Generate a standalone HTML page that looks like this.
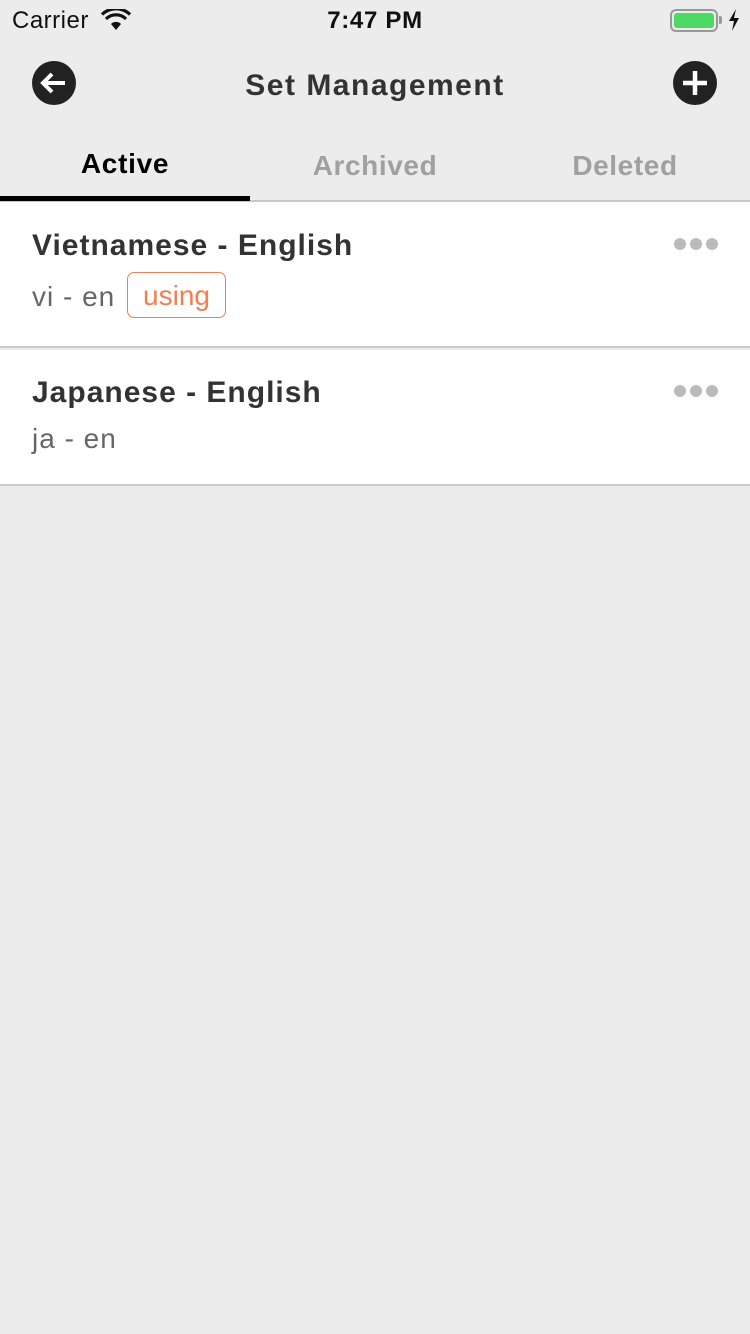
<!DOCTYPE html>
<html><head><meta charset="utf-8"><style>
*{margin:0;padding:0;box-sizing:border-box}
body{width:750px;height:1334px;background:#ececec;font-family:"Liberation Sans",sans-serif;position:relative;overflow:hidden}
.a{position:absolute;white-space:nowrap}
</style></head><body>
<div class="a" style="left:12px;top:7px;font-size:24px;color:#111;letter-spacing:0.5px">Carrier</div>
<svg class="a" style="left:101px;top:9px" width="30" height="22" viewBox="0 0 30 22"><path d="M15 21 L10 15 A7 7 0 0 1 20 15 Z" fill="#111"/><path d="M5 10 A14 14 0 0 1 25 10" stroke="#111" stroke-width="3.2" fill="none"/><path d="M1 5.5 A20 20 0 0 1 29 5.5" stroke="#111" stroke-width="3.2" fill="none"/></svg>
<div class="a" style="left:0;width:750px;text-align:center;top:7px;font-size:24px;font-weight:bold;color:#111;letter-spacing:0.7px">7:47 PM</div>
<div class="a" style="left:670px;top:9px;width:48px;height:23px;border:2px solid #999;border-radius:6px;padding:2px"><div style="width:100%;height:100%;background:#4cd964;border-radius:3px"></div></div>
<div class="a" style="left:719px;top:16px;width:3px;height:8px;background:#999;border-radius:0 2px 2px 0"></div>
<svg class="a" style="left:727px;top:9px" width="14" height="22" viewBox="0 0 14 22"><path d="M9 0 L2 12 H7 L5 22 L12 9 H7 Z" fill="#111"/></svg>
<svg class="a" style="left:32px;top:61px" width="44" height="44" viewBox="0 0 44 44"><circle cx="22" cy="22" r="22" fill="#222"/><path d="M33 22 H12 M20 13 L11 22 L20 31" stroke="#fff" stroke-width="4" fill="none"/></svg>
<div class="a" style="left:0;width:750px;text-align:center;top:69px;font-size:30px;font-weight:bold;color:#333;letter-spacing:1.5px">Set Management</div>
<svg class="a" style="left:673px;top:61px" width="44" height="44" viewBox="0 0 44 44"><circle cx="22" cy="22" r="22" fill="#222"/><path d="M22 10 V34 M10 22 H34" stroke="#fff" stroke-width="4.5"/></svg>
<div class="a" style="left:0;width:250px;text-align:center;top:148px;font-size:28px;font-weight:bold;color:#000;letter-spacing:0.7px">Active</div>
<div class="a" style="left:250px;width:250px;text-align:center;top:150px;font-size:28px;font-weight:bold;color:#a0a0a0;letter-spacing:0.6px">Archived</div>
<div class="a" style="left:500px;width:250px;text-align:center;top:150px;font-size:28px;font-weight:bold;color:#a0a0a0;letter-spacing:0.6px">Deleted</div>
<div class="a" style="left:0;top:200px;width:750px;height:2px;background:#c8c8c8"></div>
<div class="a" style="left:0;top:196px;width:250px;height:5px;background:#000"></div>
<div class="a" style="left:0;top:202px;width:750px;height:146px;background:#fff;border-bottom:2px solid #ccc"></div>
<div class="a" style="left:32px;top:229px;font-size:30px;font-weight:bold;color:#333;letter-spacing:1px">Vietnamese - English</div>
<div class="a" style="left:32px;top:281px;font-size:28px;color:#666;letter-spacing:1px">vi - en</div>
<div class="a" style="left:127px;top:272px;width:99px;height:46px;border:1.5px solid #f97c4e;border-radius:7px;color:#f97c4e;font-size:28px;text-align:center;line-height:46px">using</div>
<div class="a" style="left:0;top:350px;width:750px;height:136px;background:#fff;border-bottom:2px solid #ccc"></div>
<div class="a" style="left:32px;top:376px;font-size:30px;font-weight:bold;color:#333;letter-spacing:1px">Japanese - English</div>
<div class="a" style="left:32px;top:423px;font-size:28px;color:#666;letter-spacing:1px">ja - en</div>
<svg class="a" style="left:673px;top:237px" width="46" height="14"><circle cx="7" cy="7" r="6" fill="#bbb"/><circle cx="23" cy="7" r="6" fill="#bbb"/><circle cx="39" cy="7" r="6" fill="#bbb"/></svg>
<svg class="a" style="left:673px;top:384px" width="46" height="14"><circle cx="7" cy="7" r="6" fill="#bbb"/><circle cx="23" cy="7" r="6" fill="#bbb"/><circle cx="39" cy="7" r="6" fill="#bbb"/></svg>
</body></html>
